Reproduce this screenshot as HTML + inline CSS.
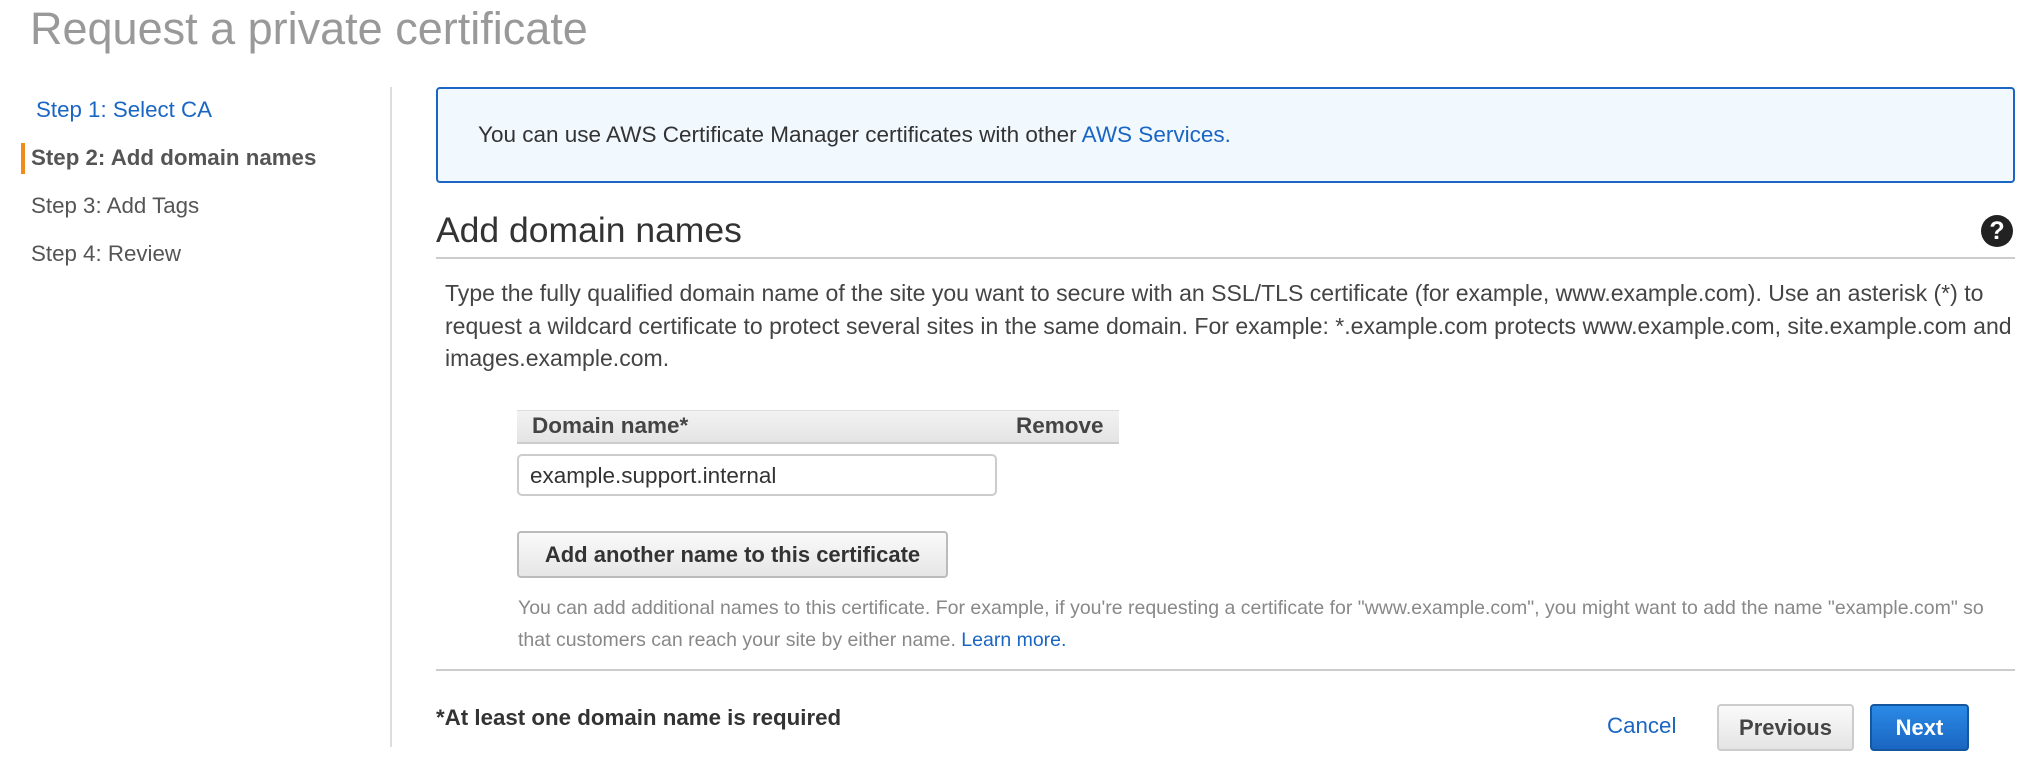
<!DOCTYPE html>
<html><head><meta charset="utf-8"><style>
*{box-sizing:border-box;margin:0;padding:0}
body{width:2036px;height:776px;background:#fff;font-family:"Liberation Sans",Arial,sans-serif;color:#444;position:relative;overflow:hidden}
.a{position:absolute;white-space:nowrap}
.title{left:30px;top:3px;font-size:45px;color:#999;line-height:52px}
.step{font-size:22.3px;line-height:24px;color:#555}
.btn{position:absolute;border-radius:4px;font-weight:bold;font-size:22px;display:flex;align-items:center;justify-content:center}
</style></head><body>
<div class="a title">Request a private certificate</div>
<div class="a step" style="left:36px;top:98px;color:#1a66c2">Step 1: Select CA</div>
<div class="a" style="left:21px;top:143px;width:4px;height:31px;background:#f08c1c"></div>
<div class="a step" style="left:31px;top:146px;font-weight:bold;color:#555">Step 2: Add domain names</div>
<div class="a step" style="left:31px;top:194px">Step 3: Add Tags</div>
<div class="a step" style="left:31px;top:242px">Step 4: Review</div>
<div class="a" style="left:390px;top:87px;width:2px;height:660px;background:#ddd"></div>

<div class="a" style="left:436px;top:87px;width:1579px;height:96px;border:2px solid #1a66c2;border-radius:4px;background:#f1f8fe"></div>
<div class="a" style="left:478px;top:122px;font-size:22.5px;color:#333">You can use AWS Certificate Manager certificates with other <span style="color:#1a66c2">AWS Services.</span></div>

<div class="a" style="left:436px;top:210px;font-size:35.5px;color:#333;line-height:40px">Add domain names</div>
<div class="a" style="left:1981px;top:215px;width:32px;height:32px;border-radius:50%;background:#222;color:#fff;font-weight:bold;font-size:25px;text-align:center;line-height:32px">?</div>
<div class="a" style="left:436px;top:257px;width:1579px;height:2px;background:#ccc"></div>

<div class="a" style="left:445px;top:277px;font-size:23.05px;line-height:32.5px;color:#444;white-space:normal;width:1600px">Type the fully qualified domain name of the site you want to secure with an SSL/TLS certificate (for example, www.example.com). Use an asterisk (*) to request a wildcard certificate to protect several sites in the same domain. For example: *.example.com protects www.example.com, site.example.com and images.example.com.</div>

<div class="a" style="left:517px;top:410px;width:602px;height:34px;background:linear-gradient(#f2f2f2,#e4e4e4);border-top:1px solid #ddd;border-bottom:2px solid #ccc"></div>
<div class="a" style="left:532px;top:413px;font-size:22.5px;font-weight:bold;color:#444">Domain name*</div>
<div class="a" style="left:1016px;top:413px;font-size:22.5px;font-weight:bold;color:#444">Remove</div>
<div class="a" style="left:517px;top:454px;width:480px;height:42px;border:2px solid #ccc;border-radius:5px;background:#fff"></div>
<div class="a" style="left:530px;top:463px;font-size:22.5px;color:#333">example.support.internal</div>

<div class="btn" style="left:517px;top:531px;width:431px;height:47px;border:2px solid #bbb;background:linear-gradient(#fafafa,#e6e6e6);color:#333">Add another name to this certificate</div>
<div class="a" style="left:518px;top:592px;font-size:19.5px;line-height:32px;color:#888;white-space:normal;width:1500px">You can add additional names to this certificate. For example, if you're requesting a certificate for "www.example.com", you might want to add the name "example.com" so that customers can reach your site by either name. <span style="color:#1a66c2">Learn more.</span></div>

<div class="a" style="left:436px;top:669px;width:1579px;height:2px;background:#ccc"></div>
<div class="a" style="left:436px;top:705px;font-size:22.3px;font-weight:bold;color:#333">*At least one domain name is required</div>
<div class="a" style="left:1607px;top:713px;font-size:22.3px;color:#1a66c2">Cancel</div>
<div class="btn" style="left:1717px;top:704px;width:137px;height:47px;border:2px solid #ccc;background:linear-gradient(#fafafa,#e4e4e4);color:#444">Previous</div>
<div class="btn" style="left:1870px;top:704px;width:99px;height:47px;border:2px solid #15579e;background:linear-gradient(#2a8ae6,#1a66c2);color:#fff">Next</div>
</body></html>
